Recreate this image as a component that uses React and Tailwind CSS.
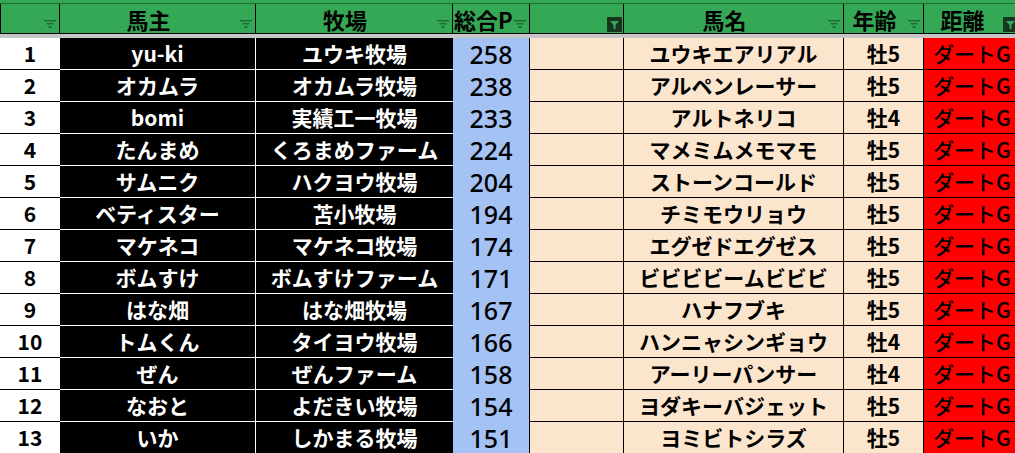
import React from 'react';

const rows = [
  [1, 'yu-ki', 'ユウキ牧場', 258, 'ユウキエアリアル', '牡5'],
  [2, 'オカムラ', 'オカムラ牧場', 238, 'アルペンレーサー', '牡5'],
  [3, 'bomi', '実績工一牧場', 233, 'アルトネリコ', '牡4'],
  [4, 'たんまめ', 'くろまめファーム', 224, 'マメミムメモマモ', '牡5'],
  [5, 'サムニク', 'ハクヨウ牧場', 204, 'ストーンコールド', '牡5'],
  [6, 'ベティスター', '苫小牧場', 194, 'チミモウリョウ', '牡5'],
  [7, 'マケネコ', 'マケネコ牧場', 174, 'エグゼドエグゼス', '牡5'],
  [8, 'ボムすけ', 'ボムすけファーム', 171, 'ビビビビームビビビ', '牡5'],
  [9, 'はな畑', 'はな畑牧場', 167, 'ハナフブキ', '牡5'],
  [10, 'トムくん', 'タイヨウ牧場', 166, 'ハンニャシンギョウ', '牡4'],
  [11, 'ぜん', 'ぜんファーム', 158, 'アーリーパンサー', '牡4'],
  [12, 'なおと', 'よだきい牧場', 154, 'ヨダキーバジェット', '牡5'],
  [13, 'いか', 'しかまる牧場', 151, 'ヨミビトシラズ', '牡5'],
];

const headers = [
  { label: '', active: false },
  { label: '馬主', active: false },
  { label: '牧場', active: false },
  { label: '総合P', active: false },
  { label: '', active: true },
  { label: '馬名', active: false },
  { label: '年齢', active: false },
  { label: '距離', active: true },
];

// Excel-style filter dropdown marker
function FilterIcon({ active }) {
  if (active) {
    return (
      <svg className="absolute right-[1px] bottom-[1px]" width="15" height="15" viewBox="0 0 15 15">
        <rect width="15" height="15" rx="1" fill="#17361f" />
        <polygon points="3,4 12,4 8.5,8 8.5,12 6.5,12 6.5,8" fill="#38a958" />
      </svg>
    );
  }
  return (
    <svg className="absolute right-[3px] bottom-[5px]" width="12" height="8" viewBox="0 0 12 8">
      <rect x="0" y="0" width="12" height="1.5" fill="#1d6f37" />
      <rect x="2.5" y="3" width="7" height="1.5" fill="#1d6f37" />
      <rect x="4.5" y="6" width="3" height="2" fill="#1d6f37" />
    </svg>
  );
}

const cols = 'grid grid-cols-[60px_196px_197px_77px_94px_220px_80px_96px]';

export default function App() {
  return (
    <div className="w-[1015px] h-[453px] overflow-hidden bg-white font-['Noto_Sans_CJK_JP','Noto_Sans',sans-serif]">
      <div className="w-[1020px]">
        {/* header */}
        <div className="bg-[#35a855] pt-[3px]">
          <div className={`${cols} border-t border-[#1c6e36]`}>
            {headers.map((h, i) => (
              <div
                key={i}
                className={`relative h-[30px] flex items-center justify-center border-b border-r border-black text-[22px] font-bold leading-none text-black whitespace-nowrap ${i === 3 ? 'justify-start pl-px' : 'pr-[18px]'} ${i === 0 ? 'border-l' : ''}`}
              >
                {h.label}
                <FilterIcon active={h.active} />
              </div>
            ))}
          </div>
        </div>
        <div className="h-[4px] bg-[#c6c6c6]" />

        {/* rows */}
        {rows.map(([no, owner, farm, pts, horse, age]) => (
          <div key={no} className={`${cols} h-[32px] text-[21px] font-bold leading-none`}>
            <div className="flex items-center justify-center bg-white text-black border-b border-black">{no}</div>
            <div className="flex items-center justify-center bg-black text-white border-b border-r border-white">{owner}</div>
            <div className="flex items-center justify-center bg-black text-white border-b border-white">{farm}</div>
            <div className="flex items-center justify-center bg-[#a4c2f4] text-black border-r border-black font-['Noto_Sans',sans-serif] font-medium text-[25px]">{pts}</div>
            <div className="bg-[#fce5cd] border-b border-r border-black" />
            <div className="flex items-center justify-center bg-[#fce5cd] text-black border-b border-r border-black whitespace-nowrap">{horse}</div>
            <div className="flex items-center justify-center bg-[#fce5cd] text-black border-b border-r border-black">{age}</div>
            <div className="flex items-center justify-center bg-[#ff0000] text-black border-b border-black font-medium whitespace-nowrap">ダートG</div>
          </div>
        ))}
      </div>
    </div>
  );
}
